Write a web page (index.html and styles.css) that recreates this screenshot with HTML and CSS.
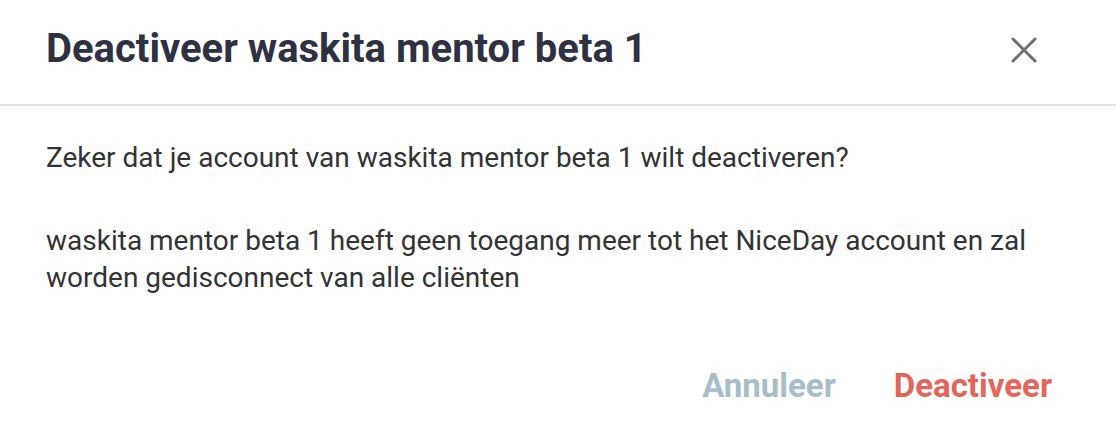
FILE: index.html
```html
<!DOCTYPE html>
<html lang="nl">
<head>
    <meta charset="UTF-8">
    <title>Deactiveer</title>
    <link rel="stylesheet" href="styles.css">
</head>
<body>
    <div class="dialog">
        <div class="dialog-header">
            <h2 class="dialog-title">Deactiveer waskita mentor beta 1</h2>
            <button class="close-btn" aria-label="Sluiten">
                <svg width="26" height="26" viewBox="0 0 26 26">
                    <path d="M2 2 L24 24 M24 2 L2 24" stroke="#6f6f6f" stroke-width="3" stroke-linecap="round"/>
                </svg>
            </button>
        </div>
        <div class="dialog-body">
            <p>Zeker dat je account van waskita mentor beta 1 wilt deactiveren?</p>
            <p>waskita mentor beta 1 heeft geen toegang meer tot het NiceDay account en zal worden gedisconnect van alle cliënten</p>
        </div>
        <div class="dialog-footer">
            <button class="btn btn-cancel">Annuleer</button>
            <button class="btn btn-danger">Deactiveer</button>
        </div>
    </div>
</body>
</html>
```

FILE: styles.css
```css
body {
    margin: 0;
    font-family: Roboto, "Liberation Sans", sans-serif;
    background: #fff;
}
.dialog {
    width: 1116px;
    height: 440px;
    background: #fff;
}
.dialog-header {
    display: flex;
    align-items: flex-start;
    justify-content: space-between;
    height: 106px;
    padding: 25px 79px 0 46px;
    border-bottom: 2px solid #e2e2e2;
    box-sizing: border-box;
}
.dialog-title {
    margin: 0;
    font-size: 40px;
    line-height: 47px;
    font-weight: 700;
    color: #2e3142;
}
.close-btn {
    border: none;
    background: none;
    padding: 0;
    margin-top: 12px;
    cursor: pointer;
    display: flex;
}
.dialog-body {
    padding: 33px 46px 0;
    font-size: 28px;
    line-height: 37px;
    color: #333;
}
.dialog-body p {
    margin: 0 0 46px;
}
.dialog-body p:last-child {
    margin-bottom: 0;
}
.dialog-footer {
    display: flex;
    justify-content: flex-end;
    gap: 58px;
    padding: 70px 64px 0 0;
}
.btn {
    border: none;
    background: none;
    padding: 0;
    font-family: inherit;
    font-size: 33px;
    font-weight: 700;
    cursor: pointer;
}
.btn-cancel {
    color: #a7bec8;
}
.btn-danger {
    color: #e3665b;
}
```
